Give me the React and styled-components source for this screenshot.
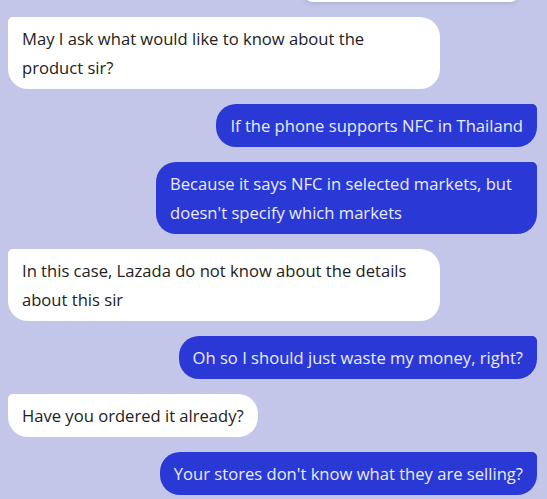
import styled, { createGlobalStyle } from "styled-components";

const GlobalStyle = createGlobalStyle`
  html, body {
    margin: 0;
    padding: 0;
    background: #c4c6e9;
  }
`;

const Thread = styled.div`
  width: 547px;
  height: 499px;
  overflow: hidden;
  box-sizing: border-box;
  padding: 0 10px 0 8px;
  display: flex;
  flex-direction: column;
  gap: 15px;
  background: #c4c6e9;
  font-family: "Open Sans", "Noto Sans", sans-serif;
  font-size: 16.6px;
`;

// bottom edge of the product card that has scrolled out of view
const ProductCard = styled.div`
  align-self: flex-end;
  width: 217px;
  height: 60px;
  margin-top: -58px;
  margin-right: 17px;
  background: #ffffff;
  border-radius: 0 0 10px 10px;
  box-shadow: 0 2px 4px rgba(60, 60, 120, 0.15);
`;

const Bubble = styled.p`
  margin: 0;
  max-width: ${(p) => (p.$mine ? "381px" : "432px")};
  box-sizing: border-box;
  padding: 7px 14px;
  line-height: 29px;
  align-self: ${(p) => (p.$mine ? "flex-end" : "flex-start")};
  background: ${(p) => (p.$mine ? "#2a39d5" : "#ffffff")};
  color: ${(p) => (p.$mine ? "#e9ebff" : "#222222")};
  border-radius: ${(p) => (p.$mine ? "20px 5px 20px 20px" : "5px 20px 20px 20px")};
`;

const messages = [
  { mine: false, text: "May I ask what would like to know about the product sir?" },
  { mine: true, text: "If the phone supports NFC in Thailand" },
  { mine: true, text: "Because it says NFC in selected markets, but doesn't specify which markets" },
  { mine: false, text: "In this case, Lazada do not know about the details about this sir" },
  { mine: true, text: "Oh so I should just waste my money, right?" },
  { mine: false, text: "Have you ordered it already?" },
  { mine: true, text: "Your stores don't know what they are selling?" },
];

export default function App() {
  return (
    <>
      <GlobalStyle />
      <Thread>
        <ProductCard />
        {messages.map((m, i) => (
          <Bubble key={i} $mine={m.mine}>
            {m.text}
          </Bubble>
        ))}
      </Thread>
    </>
  );
}
